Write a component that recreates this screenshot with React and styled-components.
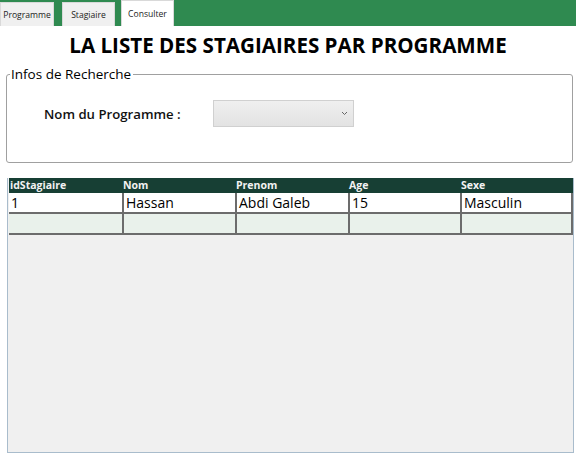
import React from "react";
import styled, { createGlobalStyle } from "styled-components";

const Global = createGlobalStyle`
  html, body { margin: 0; padding: 0; background: #ffffff; }
  body { font-family: "Open Sans", "Noto Sans", sans-serif; width: 576px; height: 455px; overflow: hidden; }
  * { box-sizing: border-box; }
`;

const Page = styled.div`
  width: 576px;
  height: 455px;
  display: flex;
  flex-direction: column;
  background: #ffffff;
`;

const TabBar = styled.div`
  height: 26px;
  flex: none;
  background: #2f8a50;
  display: flex;
  align-items: flex-end;
  gap: 8px;
`;

const Tab = styled.div`
  height: ${(p) => (p.$active ? "26px" : "24px")};
  width: ${(p) => p.$w}px;
  background: ${(p) => (p.$active ? "#ffffff" : "#f0f0f0")};
  border: 1px solid #d9d9d9;
  border-bottom: none;
  font-size: 8.6px;
  color: #222;
  display: flex;
  align-items: center;
  justify-content: center;
  padding-top: ${(p) => (p.$active ? "0" : "1px")};
  margin-left: ${(p) => p.$ml || 0}px;
`;

const Title = styled.h1`
  margin: 7px 0 0;
  font-size: 20.6px;
  font-weight: 700;
  text-align: center;
  color: #000;
  line-height: 24px;
`;

const Group = styled.fieldset`
  margin: 8px 3px 0 6px;
  height: 98px;
  flex: none;
  border: 1px solid #a0a0a0;
  border-radius: 3px;
  padding: 0;
`;

const Legend = styled.legend`
  font-size: 13.5px;
  color: #000;
  padding: 0 2px 0 1px;
  margin-left: 3px;
  line-height: 18px;
`;

const GroupBody = styled.div`
  display: flex;
  align-items: center;
  gap: 32px;
  padding: 17px 0 0 37px;
`;

const Label = styled.span`
  font-size: 13.2px;
  font-weight: 600;
  color: #111;
`;

const Combo = styled.div`
  width: 141px;
  height: 27px;
  border: 1px solid #d0d0d0;
  background: linear-gradient(#efefef, #e3e3e3);
  display: flex;
  align-items: center;
  justify-content: flex-end;
  padding-right: 5px;
`;

const Grid = styled.div`
  margin: 15px 2px 2px 7px;
  flex: 1;
  background: #f0f0f0;
  border: 1px solid #a9bccc;
  border-top: none;
  display: flex;
  flex-direction: column;
`;

const HeaderRow = styled.div`
  display: grid;
  grid-template-columns: 113px 113px 113px 112px 113px;
  margin-left: 1px;
  height: 15px;
  background: #173f34;
`;

const HeadCell = styled.div`
  font-size: 10.5px;
  font-weight: 700;
  color: #f2f2f2;
  line-height: 15px;
  padding-left: 1px;
  white-space: nowrap;
  overflow: hidden;
`;

const Row = styled.div`
  display: grid;
  grid-template-columns: 113px 113px 113px 112px 113px;
  margin-left: 1px;
  height: ${(p) => p.$h}px;
  background: ${(p) => p.$bg};
  border-bottom: 2px solid #6c6c6c;
`;

const Cell = styled.div`
  font-size: 14px;
  font-weight: 500;
  color: #000;
  padding-left: 2px;
  line-height: 20px;
  border-left: ${(p) => (p.$first ? "none" : "2px solid #6c6c6c")};
  border-right: ${(p) => (p.$last ? "2px solid #6c6c6c" : "none")};
  white-space: nowrap;
`;

const cols = ["idStagiaire", "Nom", "Prenom", "Age", "Sexe"];
const rows = [["1", "Hassan", "Abdi Galeb", "15", "Masculin"]];

export default function App() {
  return (
    <Page>
      <Global />
      <TabBar>
        <Tab $w={54}>Programme</Tab>
        <Tab $w={53}>Stagiaire</Tab>
        <Tab $w={53} $active $ml={-2}>Consulter</Tab>
      </TabBar>
      <Title>LA LISTE DES STAGIAIRES PAR PROGRAMME</Title>
      <Group>
        <Legend>Infos de Recherche</Legend>
        <GroupBody>
          <Label>Nom du Programme :</Label>
          <Combo>
            <svg width="7" height="5" viewBox="0 0 7 5">
              <path d="M1 1 L3.5 3.5 L6 1" stroke="#666" strokeWidth="1" fill="none" />
            </svg>
          </Combo>
        </GroupBody>
      </Group>
      <Grid>
        <HeaderRow>
          {cols.map((c) => (
            <HeadCell key={c}>{c}</HeadCell>
          ))}
        </HeaderRow>
        {rows.map((r, ri) => (
          <Row key={ri} $h={21} $bg="#ffffff">
            {r.map((v, i) => (
              <Cell key={i} $first={i === 0} $last={i === r.length - 1}>{v}</Cell>
            ))}
          </Row>
        ))}
        <Row $h={21} $bg="#e9f1eb">
          {cols.map((c, i) => (
            <Cell key={c} $first={i === 0} $last={i === cols.length - 1} />
          ))}
        </Row>
      </Grid>
    </Page>
  );
}
